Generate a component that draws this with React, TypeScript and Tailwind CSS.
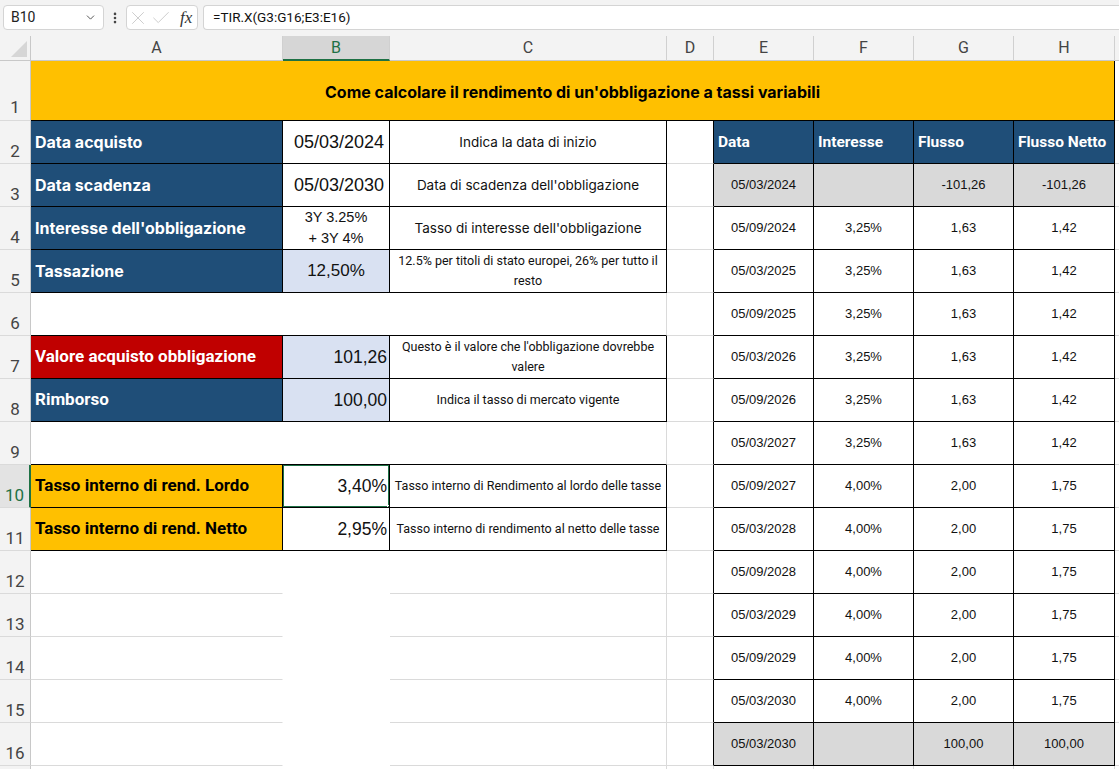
import React from 'react';
import { ChevronDown, EllipsisVertical, X, Check } from 'lucide-react';

const APTOS = "[font-family:Roboto,'Noto_Sans',sans-serif]";
const WIDE = "[font-family:Inter,Roboto,sans-serif]";
const ARIAL = "[font-family:'Liberation_Sans',Arial,sans-serif]";

const base = 'border-r border-b flex items-center overflow-hidden min-w-0';
const blk = 'border-r-black border-b-black';
const gl = 'border-r-[#dadada] border-b-[#dadada]';

type Flow = [string, string, string, string, boolean];

const flows: Flow[] = [
  ['05/03/2024', '', '-101,26', '-101,26', true],
  ['05/09/2024', '3,25%', '1,63', '1,42', false],
  ['05/03/2025', '3,25%', '1,63', '1,42', false],
  ['05/09/2025', '3,25%', '1,63', '1,42', false],
  ['05/03/2026', '3,25%', '1,63', '1,42', false],
  ['05/09/2026', '3,25%', '1,63', '1,42', false],
  ['05/03/2027', '3,25%', '1,63', '1,42', false],
  ['05/09/2027', '4,00%', '2,00', '1,75', false],
  ['05/03/2028', '4,00%', '2,00', '1,75', false],
  ['05/09/2028', '4,00%', '2,00', '1,75', false],
  ['05/03/2029', '4,00%', '2,00', '1,75', false],
  ['05/09/2029', '4,00%', '2,00', '1,75', false],
  ['05/03/2030', '4,00%', '2,00', '1,75', false],
  ['05/03/2030', '', '100,00', '100,00', true],
];

function RowHead({ n, active }: { n?: number; active?: boolean }) {
  return (
    <div
      className={`border-b border-b-[#dadada] flex items-end justify-center pb-[3px] text-[17px] leading-none ${APTOS} ${
        active
          ? 'bg-[#e3e3e3] text-[#1e7145] border-r-2 border-r-[#1e7145]'
          : 'bg-[#f3f3f3] text-[#444] border-r border-r-[#c8c8c8]'
      }`}
    >
      {n}
    </div>
  );
}

function FlowCells({ row }: { row: Flow }) {
  const [d, i, f, n, gray] = row;
  const bg = gray ? 'bg-[#d9d9d9]' : 'bg-white';
  const cls = `${base} ${blk} ${bg} justify-center text-[13px] text-[#111] ${ARIAL}`;
  return (
    <>
      <div className={cls}>{d}</div>
      <div className={cls}>{i}</div>
      <div className={cls}>{f}</div>
      <div className={cls}>{n}</div>
    </>
  );
}

const dCell = `${base} border-r-black border-b-[#dadada] bg-white`;
const xCell = 'border-b border-b-[#dadada] bg-white';

const labelBlue = `${base} ${blk} bg-[#1f4e78] text-white font-bold text-[16px] pl-[4px] ${WIDE}`;
const labelNarrow = `${base} ${blk} font-bold text-[17px] pl-[4px] ${APTOS}`;
const descCell = `${base} ${blk} bg-white justify-center text-center text-[13.5px] text-[#111] leading-[20px] ${WIDE}`;
const descNarrow = `${base} ${blk} bg-white justify-center text-center text-[12.5px] text-[#111] leading-[20px] ${APTOS}`;
const headBlue = `${base} ${blk} bg-[#1f4e78] text-white font-bold text-[15.5px] pl-[4px] pt-[2px] ${APTOS}`;

export default function App() {
  return (
    <div className="w-[1119px] h-[769px] overflow-hidden bg-white select-none">
      {/* formula bar */}
      <div className={`h-[36px] bg-[#f3f3f3] flex items-start pt-[5px] pl-[3px] ${APTOS}`}>
        <div className="w-[101px] h-[25px] bg-white border border-[#d4d4d4] rounded-[4px] flex items-center pl-[7px] pr-[6px] text-[14px] text-[#222]">
          <span className="flex-1">B10</span>
          <ChevronDown className="w-[13px] h-[13px] text-[#555]" strokeWidth={1.8} />
        </div>
        <div className="w-[22px] h-[25px] flex items-center justify-center">
          <EllipsisVertical className="w-[14px] h-[14px] text-[#444]" strokeWidth={2.5} />
        </div>
        <div className="w-[72px] h-[25px] bg-white border border-[#d4d4d4] rounded-[4px] flex items-center gap-[1px]">
          <X className="w-[22px] h-[22px] text-[#c4c4c4]" strokeWidth={0.9} />
          <Check className="w-[22px] h-[22px] text-[#c4c4c4]" strokeWidth={0.9} />
          <span className="ml-[7px] [font-family:'Liberation_Serif',serif] italic text-[17px] text-[#333] leading-none">fx</span>
        </div>
        <div className="ml-[5px] flex-1 h-[25px] bg-white border border-[#d4d4d4] border-r-0 rounded-l-[4px] flex items-center pl-[9px] text-[13.5px] text-[#111]">
          =TIR.X(G3:G16;E3:E16)
        </div>
      </div>

      <div className="grid grid-cols-[31px_252px_107px_277px_47px_100px_100px_100px_101px_4px] grid-rows-[25px_60px_repeat(16,43px)]">
        {/* column headers */}
        <div className="relative bg-[#f3f3f3] border-r border-r-[#c8c8c8] border-b border-b-[#c8c8c8]">
          <div className="absolute right-[3px] bottom-[3px] w-0 h-0 border-l-[16px] border-l-transparent border-b-[16px] border-b-[#d6d6d6]" />
        </div>
        {['A', 'B', 'C', 'D', 'E', 'F', 'G', 'H'].map((c) => (
          <div
            key={c}
            className={`flex items-center justify-center text-[16px] ${APTOS} border-r border-r-[#d0d0d0] ${
              c === 'B'
                ? 'bg-[#d6d6d6] text-[#1e7145] border-b-2 border-b-[#1e7145]'
                : 'bg-[#f3f3f3] text-[#444] border-b border-b-[#c8c8c8]'
            }`}
          >
            {c}
          </div>
        ))}
        <div className="bg-[#f3f3f3] border-b border-b-[#c8c8c8]" />

        {/* row 1 */}
        <div className={`border-b border-b-[#dadada] border-r border-r-[#c8c8c8] bg-[#f3f3f3] flex items-end justify-center pb-[4px] text-[17px] leading-none text-[#444] ${APTOS}`}>1</div>
        <div className={`col-span-8 ${base} ${blk} bg-[#ffc000] justify-center pt-[2px] font-bold text-[16px] text-black ${WIDE}`}>
          Come calcolare il rendimento di un'obbligazione a tassi variabili
        </div>
        <div className={xCell} />

        {/* row 2 */}
        <RowHead n={2} />
        <div className={labelBlue}>Data acquisto</div>
        <div className={`${base} ${blk} bg-white justify-center pl-[6px] text-[18px] text-[#111] ${ARIAL}`}>05/03/2024</div>
        <div className={descCell}>Indica la data di inizio</div>
        <div className={dCell} />
        <div className={headBlue}>Data</div>
        <div className={headBlue}>Interesse</div>
        <div className={headBlue}>Flusso</div>
        <div className={headBlue}>Flusso Netto</div>
        <div className={xCell} />

        {/* row 3 */}
        <RowHead n={3} />
        <div className={labelBlue}>Data scadenza</div>
        <div className={`${base} ${blk} bg-white justify-center pl-[6px] text-[18px] text-[#111] ${ARIAL}`}>05/03/2030</div>
        <div className={descCell}>Data di scadenza dell'obbligazione</div>
        <div className={dCell} />
        <FlowCells row={flows[0]} />
        <div className={xCell} />

        {/* row 4 */}
        <RowHead n={4} />
        <div className={labelBlue}>Interesse dell'obbligazione</div>
        <div className={`${base} ${blk} bg-white justify-center text-center text-[14.5px] leading-[21px] text-[#111] ${ARIAL}`}>
          <span>
            3Y 3.25%
            <br />+ 3Y 4%
          </span>
        </div>
        <div className={descCell}>Tasso di interesse dell'obbligazione</div>
        <div className={dCell} />
        <FlowCells row={flows[1]} />
        <div className={xCell} />

        {/* row 5 */}
        <RowHead n={5} />
        <div className={labelBlue}>Tassazione</div>
        <div className={`${base} ${blk} bg-[#d9e1f2] justify-center text-[17px] text-[#111] ${ARIAL}`}>12,50%</div>
        <div className={`${base} ${blk} bg-white justify-center text-center text-[12.5px] text-[#111] leading-[20px] px-[4px] ${APTOS}`}>
          12.5% per titoli di stato europei, 26% per tutto il resto
        </div>
        <div className={dCell} />
        <FlowCells row={flows[2]} />
        <div className={xCell} />

        {/* row 6 */}
        <RowHead n={6} />
        <div className={`col-span-3 ${base} border-r-[#dadada] border-b-black bg-white`} />
        <div className={dCell} />
        <FlowCells row={flows[3]} />
        <div className={xCell} />

        {/* row 7 */}
        <RowHead n={7} />
        <div className={`${labelNarrow} bg-[#c00000] text-white`}>Valore acquisto obbligazione</div>
        <div className={`${base} ${blk} bg-[#d9e1f2] justify-end pr-[2px] text-[17.5px] text-[#111] ${ARIAL}`}>101,26</div>
        <div className={`${descNarrow} px-[9px]`}>Questo è il valore che l'obbligazione dovrebbe valere</div>
        <div className={dCell} />
        <FlowCells row={flows[4]} />
        <div className={xCell} />

        {/* row 8 */}
        <RowHead n={8} />
        <div className={`${labelNarrow} bg-[#1f4e78] text-white`}>Rimborso</div>
        <div className={`${base} ${blk} bg-[#d9e1f2] justify-end pr-[2px] text-[17.5px] text-[#111] ${ARIAL}`}>100,00</div>
        <div className={descNarrow}>Indica il tasso di mercato vigente</div>
        <div className={dCell} />
        <FlowCells row={flows[5]} />
        <div className={xCell} />

        {/* row 9 */}
        <RowHead n={9} />
        <div className={`col-span-3 ${base} border-r-[#dadada] border-b-black bg-white`} />
        <div className={dCell} />
        <FlowCells row={flows[6]} />
        <div className={xCell} />

        {/* row 10 */}
        <RowHead n={10} active />
        <div className={`${labelNarrow} bg-[#ffc000] text-black`}>Tasso interno di rend. Lordo</div>
        <div className={`relative ${base} ${blk} bg-white justify-end pr-[2px] text-[17.5px] text-[#111] ${ARIAL}`}>
          3,40%
          <div className="absolute -left-px -top-px -right-px -bottom-px border-2 border-[#1e7145]" />
          <div className="absolute -right-[4px] -bottom-[4px] w-[6px] h-[6px] bg-[#1e7145] border border-white" />
        </div>
        <div className={descNarrow}>Tasso interno di Rendimento al lordo delle tasse</div>
        <div className={dCell} />
        <FlowCells row={flows[7]} />
        <div className={xCell} />

        {/* row 11 */}
        <RowHead n={11} />
        <div className={`${labelNarrow} bg-[#ffc000] text-black`}>Tasso interno di rend. Netto</div>
        <div className={`${base} ${blk} bg-white justify-end pr-[2px] text-[17.5px] text-[#111] ${ARIAL}`}>2,95%</div>
        <div className={descNarrow}>Tasso interno di rendimento al netto delle tasse</div>
        <div className={dCell} />
        <FlowCells row={flows[8]} />
        <div className={xCell} />

        {/* rows 12-16 */}
        {[12, 13, 14, 15, 16].map((n, k) => (
          <React.Fragment key={n}>
            <RowHead n={n} />
            <div className={`${base} border-r-white border-b-[#dadada] bg-white`} />
            <div className={`${base} border-r-white border-b-white bg-white`} />
            <div className={`${base} ${gl} bg-white`} />
            <div className={dCell} />
            <FlowCells row={flows[9 + k]} />
            <div className={xCell} />
          </React.Fragment>
        ))}

        {/* row 17 (cut off) */}
        <RowHead />
        <div className={`${base} border-r-white border-b-[#dadada] bg-white`} />
        <div className={`${base} border-r-white border-b-white bg-white`} />
        <div className={`${base} ${gl} bg-white`} />
        <div className={`${base} ${gl} bg-white`} />
        <div className={`${base} ${gl} bg-white`} />
        <div className={`${base} ${gl} bg-white`} />
        <div className={`${base} ${gl} bg-white`} />
        <div className={`${base} ${gl} bg-white`} />
        <div className={xCell} />
      </div>
    </div>
  );
}
